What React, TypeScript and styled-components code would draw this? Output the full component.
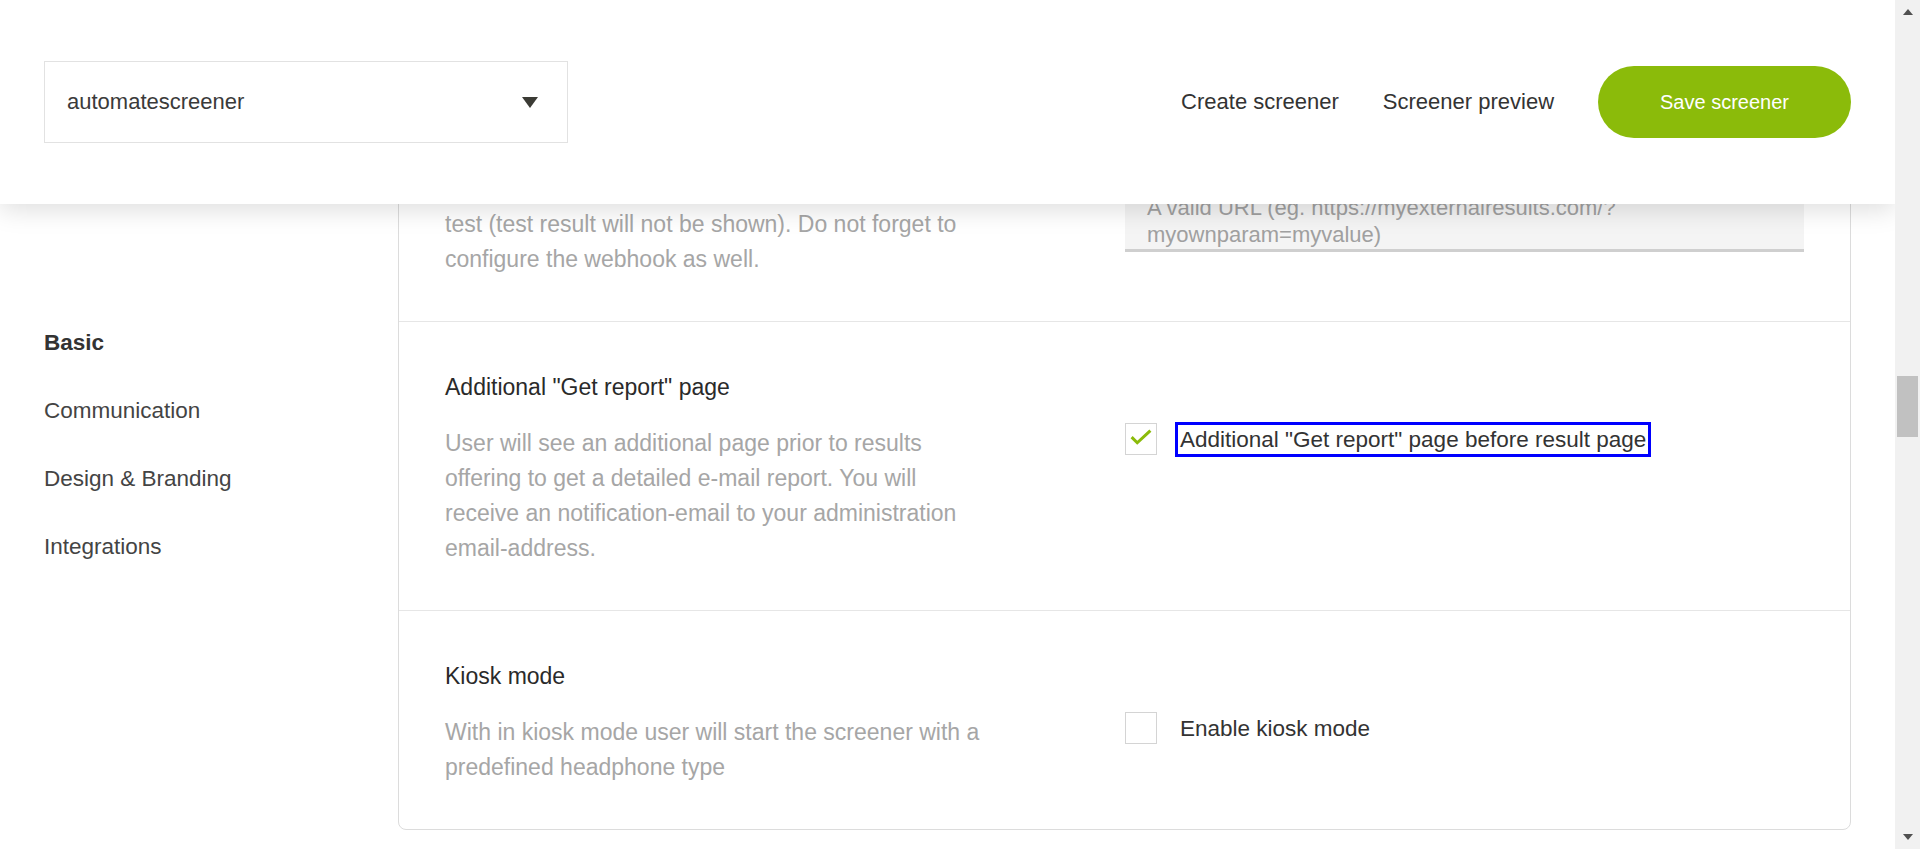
import React from 'react';
import styled, { createGlobalStyle } from 'styled-components';

const GlobalStyle = createGlobalStyle`
  body {
    margin: 0;
    background: #fff;
    color: #333;
    font-family: 'Liberation Sans', Arial, sans-serif;
  }
  * {
    box-sizing: border-box;
  }
`;

type RowProps = {
  title: string;
  children?: React.ReactNode;
  control?: React.ReactNode;
};

function SettingRow({ title, children, control }: RowProps) {
  return (
    <Row>
      <RowTitle>{title}</RowTitle>
      <RowText>{children}</RowText>
      <RowControl>{control}</RowControl>
    </Row>
  );
}

function Checkbox({ checked, label, focused }: { checked?: boolean; label: string; focused?: boolean }) {
  return (
    <>
      <Box>
        {checked && (
          <svg width="32" height="32" viewBox="0 0 32 32">
            <polyline points="6,14 12,20 26,7" fill="none" stroke="#8bbb0a" strokeWidth="3.2" />
          </svg>
        )}
      </Box>
      <CheckLabel $focused={focused}>{label}</CheckLabel>
    </>
  );
}

export default function App() {
  return (
    <>
      <GlobalStyle />
      <Shell>
        <Viewport>
          <Header>
            <ScreenerSelect>
              <span>automatescreener</span>
              <Caret />
            </ScreenerSelect>
            <HeaderNav>
              <HeaderLink href="#create">Create screener</HeaderLink>
              <HeaderLink href="#preview">Screener preview</HeaderLink>
              <SaveButton>Save screener</SaveButton>
            </HeaderNav>
          </Header>

          <Page>
            <SideNav>
              <SideLink href="#basic" $active>
                Basic
              </SideLink>
              <SideLink href="#communication">Communication</SideLink>
              <SideLink href="#design">Design &amp; Branding</SideLink>
              <SideLink href="#integrations">Integrations</SideLink>
            </SideNav>

            <Card id="basic">
              <SettingRow
                title="External result page"
                control={<UrlArea placeholder="A valid URL (eg. https://myexternalresults.com/?myownparam=myvalue)" />}
              >
                Redirect the user to this URL after the
                <br />
                test (test result will not be shown). Do not forget to configure the webhook as well.
              </SettingRow>
              <SettingRow
                title={'Additional "Get report" page'}
                control={<Checkbox checked focused label={'Additional "Get report" page before result page'} />}
              >
                User will see an additional page prior to results offering to get a detailed e-mail report. You will
                receive an notification-email to your administration email-address.
              </SettingRow>
              <SettingRow title="Kiosk mode" control={<Checkbox label="Enable kiosk mode" />}>
                With in kiosk mode user will start the screener with a predefined headphone type
              </SettingRow>
            </Card>
          </Page>
        </Viewport>

        <ScrollRail>
          <RailArrow $down={false} />
          <RailTrack>
            <RailThumb />
          </RailTrack>
          <RailArrow $down />
        </ScrollRail>
      </Shell>
    </>
  );
}

const Shell = styled.div`
  display: flex;
  height: 100vh;
  overflow: hidden;
`;

const Viewport = styled.div`
  position: relative;
  flex: 1;
  overflow: hidden;
`;

const Header = styled.header`
  position: absolute;
  top: 0;
  left: 0;
  right: 0;
  z-index: 10;
  height: 204px;
  padding: 0 44px;
  display: flex;
  align-items: center;
  justify-content: space-between;
  background: #fff;
  box-shadow: 0 6px 24px rgba(0, 0, 0, 0.13);
`;

const ScreenerSelect = styled.div`
  width: 524px;
  height: 82px;
  padding: 0 29px 0 22px;
  display: flex;
  align-items: center;
  justify-content: space-between;
  border: 1px solid #e2e2e2;
  font-size: 22px;
  color: #3a3a3a;
`;

const Caret = styled.span`
  width: 0;
  height: 0;
  border-left: 8.5px solid transparent;
  border-right: 8.5px solid transparent;
  border-top: 11px solid #3b3b35;
`;

const HeaderNav = styled.nav`
  display: flex;
  align-items: center;
  gap: 44px;
`;

const HeaderLink = styled.a`
  font-size: 22px;
  color: #333;
  text-decoration: none;
`;

const SaveButton = styled.button`
  height: 72px;
  padding: 0 62px;
  border: none;
  border-radius: 36px;
  background: #8bbb0a;
  color: #fff;
  font-family: inherit;
  font-size: 20px;
  cursor: pointer;
`;

const Page = styled.div`
  display: grid;
  grid-template-columns: 398px 1fr;
  align-items: start;
  padding: 67px 44px 0 0;
`;

const SideNav = styled.nav`
  padding: 242px 0 0 44px;
  display: flex;
  flex-direction: column;
`;

const SideLink = styled.a<{ $active?: boolean }>`
  font-size: 22.5px;
  line-height: 68px;
  color: ${p => (p.$active ? '#333' : '#444')};
  font-weight: ${p => (p.$active ? 700 : 400)};
  text-decoration: none;
`;

const Card = styled.section`
  border: 1px solid #dcdcdc;
  border-radius: 8px;
  background: #fff;
`;

const Row = styled.div`
  display: grid;
  grid-template-columns: 680px 1fr;
  row-gap: 22px;
  padding: 48px 46px 44px;

  & + & {
    border-top: 1px solid #e6e6e6;
  }
`;

const RowTitle = styled.h3`
  grid-column: 1;
  margin: 0;
  font-size: 23px;
  line-height: 34px;
  font-weight: 400;
  color: #2a2a2a;
`;

const RowText = styled.p`
  grid-column: 1;
  margin: 0;
  max-width: 542px;
  font-size: 23px;
  line-height: 35px;
  color: #a6a6a6;
`;

const RowControl = styled.div`
  grid-column: 2;
  grid-row: 2;
  align-self: start;
  margin-top: -3px;
  display: flex;
  align-items: center;
  gap: 21px;
`;

const Box = styled.span`
  width: 32px;
  height: 32px;
  flex-shrink: 0;
  border: 1px solid #d4d4d4;
  background: #fff;
  display: flex;
  align-items: center;
  justify-content: center;
`;

const CheckLabel = styled.label<{ $focused?: boolean }>`
  padding: 0 2px;
  font-size: 22.5px;
  line-height: 29px;
  color: #333;
  outline: ${p => (p.$focused ? '3px solid #0000ff' : 'none')};
`;

const UrlArea = styled.textarea`
  display: block;
  width: 100%;
  height: 83px;
  padding: 25px 22px 0;
  border: none;
  border-bottom: 3px solid #cfcfcf;
  background: #f4f4f4;
  font-family: inherit;
  font-size: 22px;
  line-height: 27px;
  color: #333;
  resize: none;
  overflow: hidden;

  &::placeholder {
    color: #a0a0a0;
  }
`;

const ScrollRail = styled.aside`
  width: 25px;
  flex-shrink: 0;
  display: flex;
  flex-direction: column;
  background: #f1f1f1;
`;

const RailArrow = styled.span<{ $down: boolean }>`
  height: 24px;
  display: flex;
  align-items: center;
  justify-content: center;

  &::before {
    content: '';
    border-left: 5.5px solid transparent;
    border-right: 5.5px solid transparent;
    ${p => (p.$down ? 'border-top: 6px solid #505050;' : 'border-bottom: 6px solid #505050;')}
  }
`;

const RailTrack = styled.div`
  flex: 1;
  padding: 352px 2px 0;
`;

const RailThumb = styled.div`
  height: 61px;
  background: #c1c1c1;
`;
